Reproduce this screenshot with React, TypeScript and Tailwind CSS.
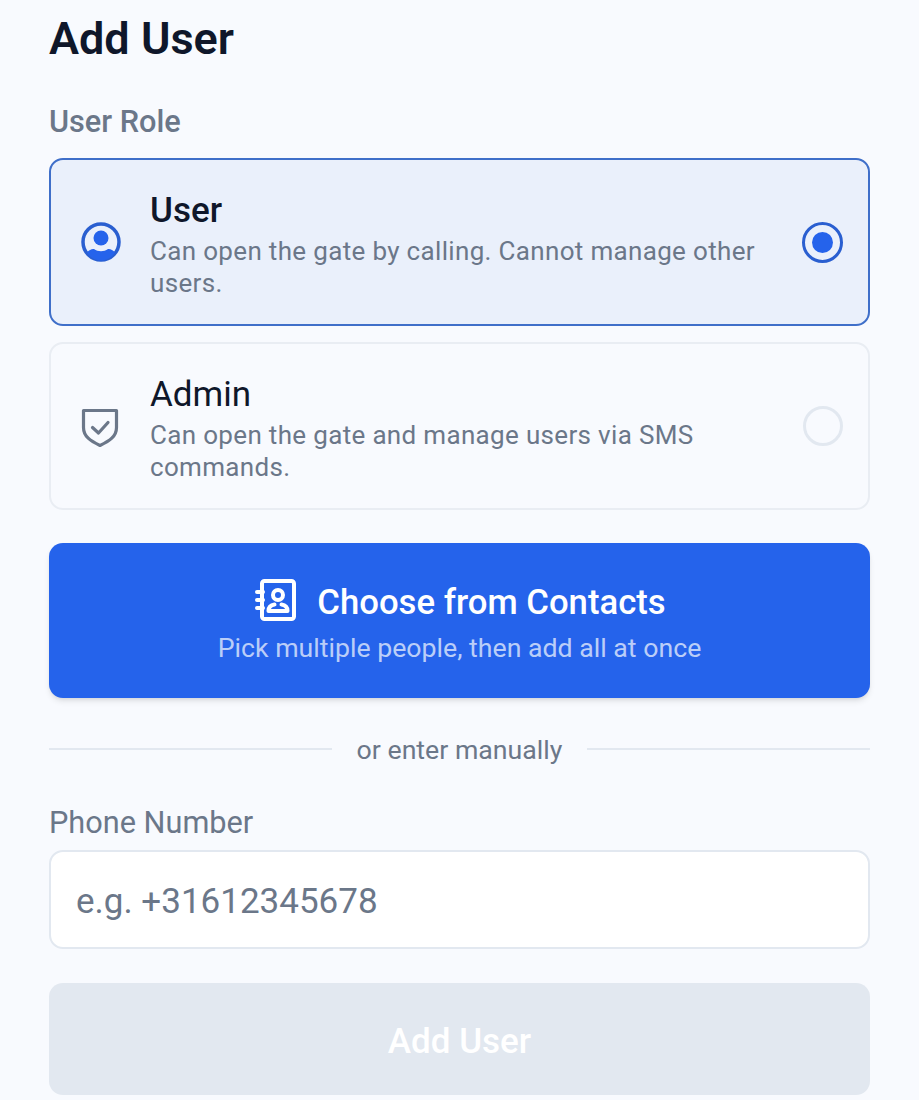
function RoleCard({
  title,
  description,
  selected,
  icon,
}: {
  title: string;
  description: string;
  selected?: boolean;
  icon: React.ReactNode;
}) {
  return (
    <div
      className={`flex h-[168px] items-center rounded-[14px] border-2 pl-[29px] pr-[25px] ${
        selected ? "border-[#3f6fc9] bg-[#eaf0fb]" : "border-[#e9edf3] bg-[#f8fafe]"
      }`}
    >
      <div className="flex w-[70px] shrink-0 items-center">{icon}</div>
      <div className="min-w-0 flex-1 pt-[7px]">
        <div className={`text-[35px] leading-[38px] text-[#0f172a] ${selected ? "font-medium" : ""}`}>{title}</div>
        <div className="mt-[5px] w-[620px] text-[26px] leading-[32px] tracking-[0.33px] text-[#6b7789]">{description}</div>
      </div>
      {selected ? (
        <div className="flex h-[41px] w-[41px] shrink-0 items-center justify-center rounded-full border-[3.500px] border-[#2a5fd0]">
          <div className="h-[21px] w-[21px] rounded-full bg-[#2563eb]" />
        </div>
      ) : (
        <div className="h-[40px] w-[40px] shrink-0 rounded-full border-[3px] border-[#e2e8f0]" />
      )}
    </div>
  );
}

function UserCircleIcon() {
  return (
    <svg width="40" height="40" className="translate-x-[1px]" viewBox="0 0 40 40" fill="none">
      <circle cx="20" cy="20" r="18" stroke="#2a5fd0" strokeWidth="3.500" />
      <circle cx="20" cy="16" r="7.500" fill="#2563eb" />
      <path d="M6 30.500c2-2.500 5-4 7-3.500 4 3 10 3 14 0 2-.5 5 1 7 3.500-3 5-8 8-14 8s-11-3-14-8Z" fill="#2563eb" />
    </svg>
  );
}

function ShieldCheckIcon() {
  return (
    <svg width="40" height="40" className="translate-y-[2px]" viewBox="0 0 40 40" fill="none" stroke="#6b7789" strokeWidth="3.200" strokeLinejoin="round" strokeLinecap="round">
      <path d="M3.500 2.500h33v17c0 9-7 13.500-16.500 18C10.500 33 3.500 28.500 3.500 19.500v-17Z" />
      <path d="M12.500 19.500l6 5.500 9.500-10.500" />
    </svg>
  );
}

function ContactBookIcon() {
  return (
    <svg width="42" height="44" className="-translate-y-[2px]" viewBox="0 0 42 44" fill="none" stroke="#ffffff" strokeWidth="4" strokeLinecap="round" strokeLinejoin="round">
      <rect x="7" y="3" width="32" height="38" rx="2.500" />
      <path d="M2 14h6M2 22h6M2 30h6" />
      <circle cx="23" cy="17" r="5" />
      <path d="M13.500 33c0-4 2.500-6 6-6.500M32.500 33c0-4-2.500-6-6-6.500M13.500 33h19" />
    </svg>
  );
}

export default function App() {
  return (
    <div className="h-[1100px] w-full overflow-hidden bg-[#f8fafe] px-[49px] font-['Roboto',sans-serif]">
      <h1 className="pt-[14px] text-[45px] font-semibold leading-[50px] text-[#0f172a]">Add User</h1>
      <div className="mt-[40px] text-[30.700px] font-medium leading-[36px] text-[#6b7789]">User Role</div>

      <div className="mt-[18px] flex flex-col gap-[16px]">
        <RoleCard
          selected
          title="User"
          description="Can open the gate by calling. Cannot manage other users."
          icon={<UserCircleIcon />}
        />
        <RoleCard
          title="Admin"
          description="Can open the gate and manage users via SMS commands."
          icon={<ShieldCheckIcon />}
        />
      </div>

      <button className="mt-[33px] flex h-[155px] w-full flex-col items-center justify-center rounded-[14px] bg-[#2563eb] pt-[3px] shadow-md">
        <div className="flex items-center gap-[20px] pl-[2px]">
          <ContactBookIcon />
          <span className="text-[34.700px] font-medium leading-[44px] text-white">Choose from Contacts</span>
        </div>
        <span className="mt-[7px] text-[26.700px] leading-[34px] text-white/70">Pick multiple people, then add all at once</span>
      </button>

      <div className="mt-[35px] flex items-center gap-[25px]">
        <div className="h-[2px] flex-1 -translate-y-[1px] bg-[#e2e8f0]" />
        <span className="text-[26.700px] leading-[34px] text-[#6b7789]">or enter manually</span>
        <div className="h-[2px] flex-1 -translate-y-[1px] bg-[#e2e8f0]" />
      </div>

      <div className="mt-[37px] text-[30.700px] leading-[38px] text-[#6b7789]">Phone Number</div>
      <div className="mt-[8px] flex h-[99px] items-center rounded-[14px] border-2 border-[#e2e8f0] bg-white px-[25px] pt-[6px] text-[35px] text-[#6b7789]">
        e.g. +31612345678
      </div>

      <button className="mt-[34px] flex h-[112px] w-full items-center justify-center rounded-[14px] bg-[#e2e8f0] pt-[6px] text-[35px] font-medium text-white">
        Add User
      </button>
    </div>
  );
}
